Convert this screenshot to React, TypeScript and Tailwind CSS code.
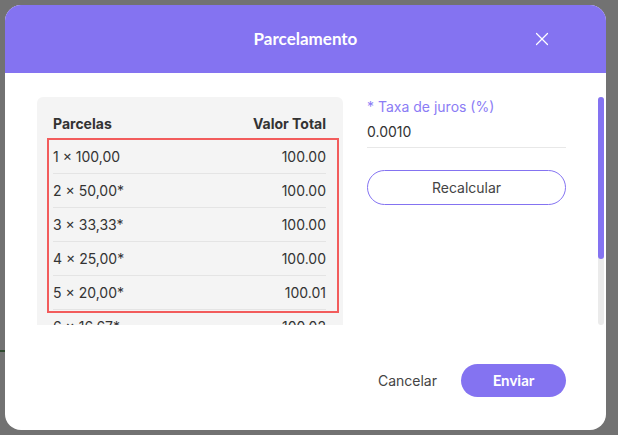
import { X } from "lucide-react";

const rows = [
  { parcelas: "1 × 100,00", total: "100.00" },
  { parcelas: "2 × 50,00*", total: "100.00" },
  { parcelas: "3 × 33,33*", total: "100.00" },
  { parcelas: "4 × 25,00*", total: "100.00" },
  { parcelas: "5 × 20,00*", total: "100.01" },
  { parcelas: "6 × 16,67*", total: "100.02" },
];

export default function App() {
  return (
    <div className="relative h-[435px] w-[618px] overflow-hidden bg-[#727272] font-['Inter',sans-serif]">
      <div className="absolute left-0 top-[350px] h-[2px] w-[5px] bg-[#2f4a2f]" />
      <div className="absolute left-[5px] top-[5px] flex h-[425px] w-[601px] flex-col overflow-hidden rounded-[16px] bg-white">
        <div className="relative flex h-[68px] shrink-0 items-center justify-center bg-[#8473f1]">
          <h2 className="font-['Lato',sans-serif] text-[17px] font-bold text-white">Parcelamento</h2>
          <button className="absolute right-[53px] top-[23px] text-white">
            <X size={22} strokeWidth={1.3} />
          </button>
        </div>

        <div className="mt-[24px] flex h-[228px] shrink-0">
          <div className="ml-[32px] flex h-full w-[306px] flex-col overflow-hidden rounded-t-[6px] bg-[#f4f4f4] px-[17px] pl-[16px]">
            <div className="flex h-[43px] shrink-0 items-start justify-between pt-[16px] text-[14px] font-bold text-[#333]">
              <span>Parcelas</span>
              <span>Valor Total</span>
            </div>
            <div className="relative">
              <div className="pointer-events-none absolute left-[-6px] right-[-13px] top-[-2px] h-[175px] border-2 border-[#f25c5c]" />
              {rows.map((r) => (
                <div
                  key={r.parcelas}
                  className="flex h-[34px] items-center justify-between border-b border-[#e4e4e4] text-[14px] text-[#333]"
                >
                  <span>{r.parcelas}</span>
                  <span>{r.total}</span>
                </div>
              ))}
            </div>
          </div>

          <div className="ml-[24px] w-[199px]">
            <label className="block text-[14px] leading-[20px] text-[#8b7cf5]">* Taxa de juros (%)</label>
            <div className="mt-[5px] border-b border-[#e8e8e8] pb-[5px] text-[14px] leading-[20px] text-[#333]">0.0010</div>
            <button className="mt-[22px] h-[35px] w-full rounded-full border border-[#8473f1] text-[14px] text-[#444]">
              Recalcular
            </button>
          </div>

          <div className="ml-auto mr-[2px] h-full w-[6px] rounded-full bg-[#ebebeb]">
            <div className="h-[162px] w-full rounded-full bg-[#8473f1]" />
          </div>
        </div>

        <div className="mt-auto mb-[33px] flex items-center justify-end gap-[24px] pr-[40px]">
          <button className="text-[14px] text-[#444]">Cancelar</button>
          <button className="h-[33px] w-[105px] rounded-full bg-[#8473f1] font-['Lato',sans-serif] text-[15px] font-bold text-white">
            Enviar
          </button>
        </div>
      </div>
    </div>
  );
}
